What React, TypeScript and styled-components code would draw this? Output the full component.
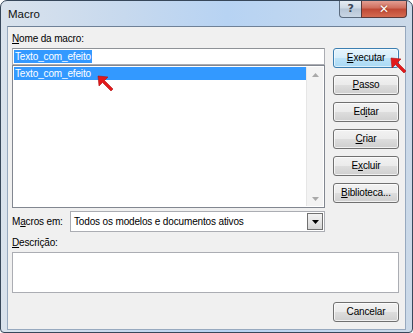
import React from "react";
import styled, { createGlobalStyle } from "styled-components";

const Global = createGlobalStyle`
  html, body { margin: 0; padding: 0; background: #ffffff; }
  body { font-family: "Liberation Sans", Arial, sans-serif; font-size: 10px; letter-spacing: -0.15px; color: #000; }
  * { box-sizing: border-box; }
`;

const Window = styled.div`
  position: relative;
  width: 413px;
  height: 333px;
  border: 1px solid #37475a;
  border-radius: 7px 7px 4px 4px;
  background: linear-gradient(90deg, #d9e2ec 0%, #c7d9ee 30%, #b7d3f3 55%, #c4d8ee 85%, #cbd9e8 100%);
  display: flex;
  flex-direction: column;
  overflow: hidden;
`;

const TitleBar = styled.div`
  height: 25px;
  display: flex;
  align-items: flex-start;
  padding-right: 5px;
  flex-shrink: 0;
`;

const Title = styled.div`
  align-self: center;
  padding-left: 7px;
  font-size: 11.5px;
  letter-spacing: 0;
  color: #111;
  flex: 1;
`;

const CaptionButtons = styled.div`
  display: flex;
  margin-top: -1px;
`;

const HelpButton = styled.div`
  width: 22px;
  height: 18px;
  border: 1px solid #5b6b7e;
  border-top: none;
  border-right: none;
  border-radius: 0 0 0 4px;
  background: linear-gradient(180deg, #e8eef5 0%, #cdd8e4 48%, #b6c5d6 52%, #c9d6e4 100%);
  display: flex;
  align-items: center;
  justify-content: center;
  font-family: "DejaVu Sans", sans-serif;
  font-size: 11px;
  font-weight: bold;
  color: #3a4656;
`;

const CloseButton = styled.div`
  width: 46px;
  height: 18px;
  border: 1px solid #5b3a3a;
  border-top: none;
  border-radius: 0 0 4px 0;
  background: linear-gradient(180deg, #e6a59a 0%, #d1705f 45%, #c04a36 55%, #d46a50 100%);
  display: flex;
  align-items: center;
  justify-content: center;
  color: #ffffff;
  font-family: "DejaVu Sans", sans-serif;
  font-size: 12px;
  font-weight: bold;
  text-shadow: 0 0 2px #7a2010;
`;

const Client = styled.div`
  flex: 1;
  margin: 0 6px 6px 6px;
  border: 1px solid #97a9bf;
  border-top-color: #6f8197;
  background: #f0f0f0;
  padding: 4px 6px 7px 4px;
  display: flex;
  flex-direction: column;
`;

const TopArea = styled.div`
  display: flex;
  gap: 8px;
`;

const LeftCol = styled.div`
  width: 313px;
  display: flex;
  flex-direction: column;
`;

const Label = styled.div<{ $mb?: number }>`
  line-height: 16px;
  height: 16px;
  margin-bottom: ${(p) => p.$mb ?? 1}px;
  white-space: nowrap;
`;

const TextInput = styled.div`
  height: 17px;
  border: 1px solid #abadb3;
  border-top-color: #8e9297;
  background: #fff;
  padding: 1px 1px;
  display: flex;
  align-items: center;
`;

const Selected = styled.span`
  background: #3399ff;
  color: #fff;
  line-height: 13px;
  padding: 0 1px;
`;

const ListBox = styled.div`
  height: 143px;
  border: 1px solid #828790;
  background: #fff;
  display: flex;
  padding: 1px;
`;

const ListItems = styled.div`
  flex: 1;
  display: flex;
  flex-direction: column;
`;

const ListItem = styled.div<{ $selected?: boolean }>`
  height: 13px;
  line-height: 13px;
  padding-left: 1px;
  background: ${(p) => (p.$selected ? "#3399ff" : "transparent")};
  color: ${(p) => (p.$selected ? "#fff" : "#000")};
`;

const ScrollBar = styled.div`
  width: 17px;
  background: #f3f3f3;
  border-left: 1px solid #e6e6e6;
  display: flex;
  flex-direction: column;
  justify-content: space-between;
  align-items: center;
  padding: 6px 0 5px;
`;

const ButtonCol = styled.div`
  width: 66px;
  margin-top: 17px;
  display: flex;
  flex-direction: column;
  gap: 7px;
`;

const Button = styled.div<{ $default?: boolean }>`
  height: 20px;
  width: 66px;
  border: 1px solid ${(p) => (p.$default ? "#3c7fb1" : "#707070")};
  border-radius: 3px;
  background: ${(p) =>
    p.$default
      ? "linear-gradient(180deg, #e5f4fc 0%, #d7eefb 48%, #bde3f8 52%, #a9d9f5 100%)"
      : "linear-gradient(180deg, #f2f2f2 0%, #ebebeb 48%, #dddddd 52%, #cfcfcf 100%)"};
  box-shadow: inset 0 0 0 1px ${(p) => (p.$default ? "rgba(255,255,255,0.6)" : "rgba(255,255,255,0.7)")};
  display: flex;
  align-items: center;
  justify-content: center;
  line-height: 14px;
  color: #000;
`;

const U = styled.span`
  text-decoration: underline;
  text-underline-offset: 1px;
`;

const MacrosRow = styled.div`
  display: flex;
  align-items: center;
  margin-top: 3px;
  height: 21px;
`;

const RowLabel = styled.div`
  width: 58px;
  white-space: nowrap;
`;

const Combo = styled.div`
  width: 255px;
  height: 21px;
  border: 1px solid #abadb3;
  background: #fff;
  display: flex;
  align-items: center;
  padding: 1px;
`;

const ComboText = styled.div`
  flex: 1;
  padding-left: 2px;
  white-space: nowrap;
`;

const ComboButton = styled.div`
  width: 16px;
  height: 17px;
  border: 1px solid #707070;
  background: linear-gradient(180deg, #f2f2f2 0%, #e6e6e6 50%, #d6d6d6 100%);
  display: flex;
  align-items: center;
  justify-content: center;
`;

const DescLabel = styled(Label)`
  margin-top: 3px;
`;

const DescBox = styled.div`
  height: 41px;
  border: 1px solid #abadb3;
  background: #fff;
`;

const BottomRow = styled.div`
  display: flex;
  justify-content: flex-end;
  margin-top: 9px;
`;

const ArrowMark = styled.svg<{ $x: number; $y: number }>`
  position: absolute;
  left: ${(p) => p.$x}px;
  top: ${(p) => p.$y}px;
  width: 16px;
  height: 16px;
  overflow: visible;
`;

function RedArrow({ x, y }: { x: number; y: number }) {
  return (
    <ArrowMark $x={x} $y={y} viewBox="0 0 16 16">
      <polygon
        points="0,0 10,1 6.5,4.5 15,13 13,15 4.5,6.5 1,10"
        fill="#e3191b"
        stroke="#b01010"
        strokeWidth="0.6"
        strokeLinejoin="round"
      />
    </ArrowMark>
  );
}

function Tri({ up }: { up?: boolean }) {
  return (
    <svg width="7" height="4" viewBox="0 0 7 4">
      <polygon points={up ? "3.5,0 7,4 0,4" : "0,0 7,0 3.5,4"} fill="#a9a9a9" />
    </svg>
  );
}

export default function App() {
  return (
    <>
      <Global />
      <Window>
        <TitleBar>
          <Title>Macro</Title>
          <CaptionButtons>
            <HelpButton>?</HelpButton>
            <CloseButton>✕</CloseButton>
          </CaptionButtons>
        </TitleBar>
        <Client>
          <TopArea>
            <LeftCol>
              <Label>
                <U>N</U>ome da macro:
              </Label>
              <TextInput>
                <Selected>Texto_com_efeito</Selected>
              </TextInput>
              <ListBox>
                <ListItems>
                  <ListItem $selected>Texto_com_efeito</ListItem>
                </ListItems>
                <ScrollBar>
                  <Tri up />
                  <Tri />
                </ScrollBar>
              </ListBox>
            </LeftCol>
            <ButtonCol>
              <Button $default>
                <span>
                  <U>E</U>xecutar
                </span>
              </Button>
              <Button>
                <span>
                  <U>P</U>asso
                </span>
              </Button>
              <Button>
                <span>
                  Ed<U>i</U>tar
                </span>
              </Button>
              <Button>
                <span>
                  <U>C</U>riar
                </span>
              </Button>
              <Button>
                <span>
                  E<U>x</U>cluir
                </span>
              </Button>
              <Button>
                <span>
                  <U>B</U>iblioteca...
                </span>
              </Button>
            </ButtonCol>
          </TopArea>
          <MacrosRow>
            <RowLabel>
              M<U>a</U>cros em:
            </RowLabel>
            <Combo>
              <ComboText>Todos os modelos e documentos ativos</ComboText>
              <ComboButton>
                <svg width="7" height="4" viewBox="0 0 7 4">
                  <polygon points="0,0 7,0 3.5,4" fill="#000" />
                </svg>
              </ComboButton>
            </Combo>
          </MacrosRow>
          <DescLabel $mb={1}>
            <U>D</U>escrição:
          </DescLabel>
          <DescBox />
          <BottomRow>
            <Button>Cancelar</Button>
          </BottomRow>
        </Client>
        <RedArrow x={97} y={75} />
        <RedArrow x={390} y={57} />
      </Window>
    </>
  );
}
